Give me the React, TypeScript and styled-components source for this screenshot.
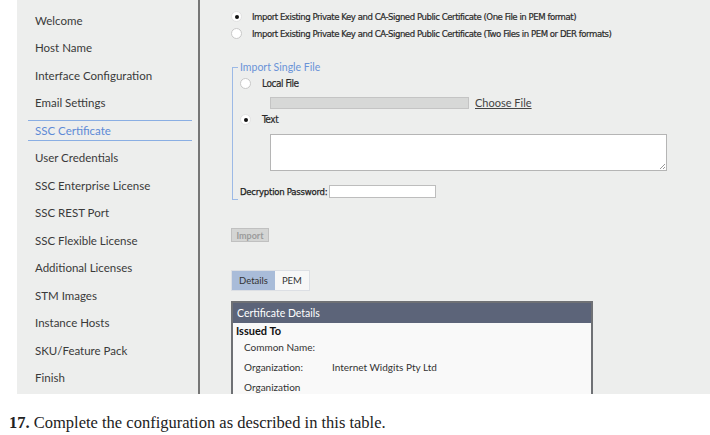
import styled, { createGlobalStyle } from 'styled-components'

const GlobalStyle = createGlobalStyle`
  body {
    margin: 0;
    background: #ffffff;
    font-family: "Liberation Sans", Arial, sans-serif;
  }
`

const navItems = [
  'Welcome',
  'Host Name',
  'Interface Configuration',
  'Email Settings',
  'SSC Certificate',
  'User Credentials',
  'SSC Enterprise License',
  'SSC REST Port',
  'SSC Flexible License',
  'Additional Licenses',
  'STM Images',
  'Instance Hosts',
  'SKU/Feature Pack',
  'Finish',
]

const Page = styled.div`
  width: 710px;
  height: 435px;
  overflow: hidden;
`

const Shot = styled.div`
  margin-left: 17px;
  height: 394px;
  background: #edeeed;
  display: flex;
  overflow: hidden;
`

const Nav = styled.nav`
  width: 183px;
  flex: none;
  box-sizing: border-box;
  padding: 9.5px 6px 0 11px;
  border-right: 2px solid #767676;
  display: flex;
  flex-direction: column;
  gap: 6.5px;
`

const NavItem = styled.div<{ $active?: boolean }>`
  height: 21px;
  box-sizing: border-box;
  padding-left: 7px;
  display: flex;
  align-items: center;
  font-family: Lato, "Open Sans", sans-serif;
  font-size: 11.5px;
  color: ${p => (p.$active ? '#5d8ad6' : '#3a3a3a')};
  border-top: 1px solid ${p => (p.$active ? '#8aaee3' : 'transparent')};
  border-bottom: 1px solid ${p => (p.$active ? '#8aaee3' : 'transparent')};
`

const Content = styled.main`
  flex: 1;
  padding: 8px 0 0 31px;
  font-family: "Liberation Sans Narrow", "DejaVu Sans Condensed", "Liberation Sans", sans-serif;
  font-size: 9.5px;
  letter-spacing: -0.45px;
  color: #2a2a2a;
`

const RadioRow = styled.label`
  display: flex;
  align-items: center;
  height: 17px;
  gap: 10px;
  -webkit-text-stroke: 0.2px #2a2a2a;
`

const Radio = styled.span<{ $checked?: boolean }>`
  width: 11px;
  height: 11px;
  flex: none;
  box-sizing: border-box;
  border-radius: 50%;
  background: #fff;
  border: 1px solid ${p => (p.$checked ? '#e2e2e2' : '#c8c8c8')};
  display: flex;
  align-items: center;
  justify-content: center;

  &::after {
    content: '';
    width: 4px;
    height: 4px;
    border-radius: 50%;
    background: ${p => (p.$checked ? '#111' : 'transparent')};
  }
`

const Fieldset = styled.div`
  position: relative;
  display: flow-root;
  margin: 25px 0 0 1px;
  border-left: 1px solid #9cb9e6;
  padding: 0 0 0 7px;
  height: 133px;
  box-sizing: border-box;

  &::after {
    content: '';
    position: absolute;
    left: 0;
    bottom: 0;
    width: 5px;
    border-top: 1px solid #9cb9e6;
  }
`

const Legend = styled.div`
  position: relative;
  margin: -7px 0 0 0;
  height: 14px;
  line-height: 14px;
  font-family: Lato, "Open Sans", sans-serif;
  font-size: 10.5px;
  letter-spacing: 0;
  color: #6a93d8;

  &::before {
    content: '';
    position: absolute;
    left: -7px;
    top: 7px;
    width: 5px;
    border-top: 1px solid #9cb9e6;
  }
`

const SubRow = styled(RadioRow)<{ $gap: number }>`
  margin-top: ${p => p.$gap}px;
  gap: 11px;
  font-size: 10px;
`

const FileRow = styled.div`
  display: flex;
  align-items: center;
  margin: 4px 0 0 30px;
  gap: 6px;
  height: 13px;
`

const FileBox = styled.div`
  width: 199px;
  height: 12px;
  box-sizing: border-box;
  background: #d7d8d7;
  border: 1px solid #c4c4c4;
`

const ChooseLink = styled.span`
  font-family: Lato, "Open Sans", sans-serif;
  font-size: 11px;
  letter-spacing: 0;
  color: #444;
  text-decoration: underline;
`

const TextArea = styled.div`
  position: relative;
  margin: 6px 0 0 30px;
  width: 397px;
  height: 37px;
  box-sizing: border-box;
  background: #fff;
  border: 1px solid #b5b5b5;

  &::after {
    content: '';
    position: absolute;
    right: 1px;
    bottom: 1px;
    width: 5px;
    height: 5px;
    background: linear-gradient(135deg, transparent 45%, #999 45%, #999 55%, transparent 55%, transparent 75%, #999 75%, #999 85%, transparent 85%);
  }
`

const PasswordRow = styled.div`
  display: flex;
  align-items: center;
  gap: 2px;
  margin-top: 13px;
  height: 14px;
  font-size: 9.5px;
  letter-spacing: -0.25px;
  color: #222;
  -webkit-text-stroke: 0.25px #222;
`

const PasswordInput = styled.div`
  width: 107px;
  height: 13px;
  box-sizing: border-box;
  background: #fff;
  border: 1px solid #bdbdbd;
`

const ImportButton = styled.div`
  margin-top: 28px;
  width: 38px;
  height: 14px;
  box-sizing: border-box;
  border: 1px solid #c0c0c0;
  background: #d4d5d4;
  color: #9b9b9b;
  font-family: Lato, "Open Sans", sans-serif;
  font-weight: bold;
  font-size: 9px;
  letter-spacing: 0;
  display: flex;
  align-items: center;
  justify-content: center;
`

const Tabs = styled.div`
  display: flex;
  margin-top: 28px;
  height: 19px;
  border: 1px solid #dcdfe4;
  width: fit-content;
`

const Tab = styled.div<{ $active?: boolean }>`
  padding: 0 7px;
  display: flex;
  align-items: center;
  font-family: Lato, "Open Sans", sans-serif;
  font-size: 9.5px;
  letter-spacing: 0;
  color: #333;
  background: ${p => (p.$active ? '#a9bcd9' : '#f7f7f7')};
`

const Panel = styled.div`
  margin-top: 10px;
  width: 362px;
  height: 120px;
  box-sizing: border-box;
  border: 2px solid #6f7175;
  background: #f9f9f9;
  font-family: Lato, "Open Sans", sans-serif;
  letter-spacing: 0;
`

const PanelHeader = styled.div`
  height: 20px;
  padding-left: 4px;
  display: flex;
  align-items: center;
  background: #5c6479;
  color: #fff;
  font-size: 10.5px;
`

const SectionTitle = styled.div`
  padding-left: 3px;
  height: 14px;
  display: flex;
  align-items: center;
  font-size: 11px;
  font-weight: bold;
  color: #111;
`

const Field = styled.div`
  display: grid;
  grid-template-columns: 88px 1fr;
  padding-left: 11px;
  height: 20px;
  align-items: center;
  font-size: 10px;
  color: #333;
`

const Caption = styled.p`
  margin: 19px 0 0 9px;
  font-family: "Liberation Serif", "Times New Roman", serif;
  font-size: 16.5px;
  color: #222;

  b {
    font-weight: bold;
  }
`

export default function App() {
  return (
    <Page>
      <GlobalStyle />
      <Shot>
        <Nav>
          {navItems.map(item => (
            <NavItem key={item} $active={item === 'SSC Certificate'}>
              {item}
            </NavItem>
          ))}
        </Nav>
        <Content>
          <RadioRow>
            <Radio $checked />
            Import Existing Private Key and CA-Signed Public Certificate (One File in PEM format)
          </RadioRow>
          <RadioRow>
            <Radio />
            Import Existing Private Key and CA-Signed Public Certificate (Two Files in PEM or DER formats)
          </RadioRow>

          <Fieldset>
            <Legend>Import Single File</Legend>
            <SubRow $gap={1}>
              <Radio />
              Local File
            </SubRow>
            <FileRow>
              <FileBox />
              <ChooseLink>Choose File</ChooseLink>
            </FileRow>
            <SubRow $gap={2}>
              <Radio $checked />
              Text
            </SubRow>
            <TextArea />
            <PasswordRow>
              Decryption Password:
              <PasswordInput />
            </PasswordRow>
          </Fieldset>

          <ImportButton>Import</ImportButton>

          <Tabs>
            <Tab $active>Details</Tab>
            <Tab>PEM</Tab>
          </Tabs>

          <Panel>
            <PanelHeader>Certificate Details</PanelHeader>
            <SectionTitle>Issued To</SectionTitle>
            <Field>
              <span>Common Name:</span>
              <span />
            </Field>
            <Field>
              <span>Organization:</span>
              <span>Internet Widgits Pty Ltd</span>
            </Field>
            <Field>
              <span>Organization</span>
              <span />
            </Field>
          </Panel>
        </Content>
      </Shot>
      <Caption>
        <b>17.</b> Complete the configuration as described in this table.
      </Caption>
    </Page>
  )
}
